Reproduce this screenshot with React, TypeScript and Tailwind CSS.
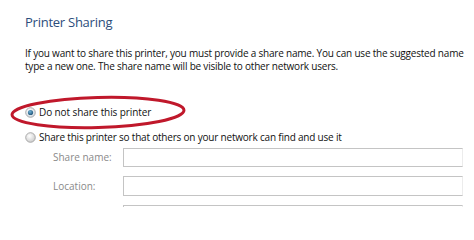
import React from "react";

function Radio({ checked }: { checked?: boolean }) {
  return (
    <svg width="11" height="11" viewBox="0 0 11 11" className="shrink-0">
      <defs>
        <radialGradient id={checked ? "rc" : "ru"} cx="40%" cy="35%" r="70%">
          <stop offset="0%" stopColor="#ffffff" />
          <stop offset="100%" stopColor={checked ? "#cfd8e0" : "#c9c9c9"} />
        </radialGradient>
        <radialGradient id="dot" cx="40%" cy="35%" r="70%">
          <stop offset="0%" stopColor="#6fb3d8" />
          <stop offset="100%" stopColor="#1d4f73" />
        </radialGradient>
      </defs>
      <circle cx="5.5" cy="5.5" r="4.8" fill={checked ? "url(#rc)" : "url(#ru)"} stroke="#9a9a9a" strokeWidth="0.8" />
      {checked && <circle cx="5.5" cy="5.5" r="2.6" fill="url(#dot)" />}
    </svg>
  );
}

export default function App() {
  return (
    <div
      className="relative w-[474px] h-[207px] overflow-hidden bg-white"
      style={{ fontFamily: '"Open Sans", "Noto Sans", Arial, sans-serif' }}
    >
      <div className="pl-[25px] pt-[13px]">
        <div className="text-[13px] leading-[18px] text-[#2c4d7c] tracking-[-0.25px]">Printer Sharing</div>
        <div className="mt-[16px] text-[10px] leading-[13px] text-[#111] tracking-[-0.2px]">
          <div>If you want to share this printer, you must provide a share name. You can use the suggested name</div>
          <div>type a new one. The share name will be visible to other network users.</div>
        </div>
        <div className="mt-[33px] flex items-center gap-[3px] text-[10px] leading-[12px] text-[#111] tracking-[-0.1px]">
          <Radio checked />
          <span>Do not share this printer</span>
        </div>
        <div className="mt-[13px] flex items-center gap-[3px] text-[10px] leading-[12px] text-[#111] tracking-[-0.2px]">
          <Radio />
          <span>Share this printer so that others on your network can find and use it</span>
        </div>
        <div className="mt-[5px] flex flex-col gap-[9px] pl-[28px] text-[10px] text-[#8a8a8a]">
          <div className="flex items-center">
            <span className="w-[70px]">Share name:</span>
            <div className="h-[19px] w-[340px] border border-[#c4c4c4] border-r-[#ececec]" />
          </div>
          <div className="flex items-center">
            <span className="w-[70px]">Location:</span>
            <div className="h-[20px] w-[340px] border border-[#c4c4c4] border-r-[#ececec]" />
          </div>
          <div className="flex items-center">
            <span className="w-[70px]"></span>
            <div className="h-[20px] w-[340px] border border-[#c4c4c4] border-r-[#ececec]" />
          </div>
        </div>
      </div>
      <svg className="absolute left-0 top-0 pointer-events-none" width="474" height="207">
        <ellipse
          cx="98"
          cy="112.5"
          rx="86"
          ry="15"
          fill="none"
          stroke="#c0182b"
          strokeWidth="3"
          transform="rotate(-1.5 98 112.5)"
        />
      </svg>
    </div>
  );
}
